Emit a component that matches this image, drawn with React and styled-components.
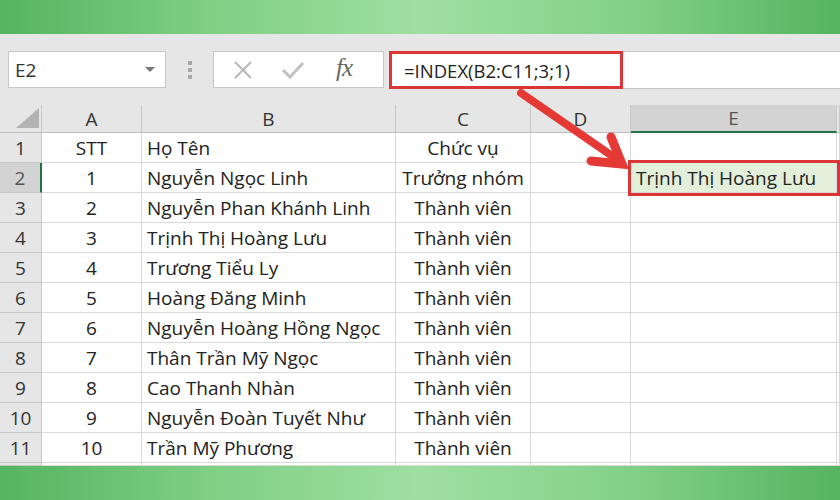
import React from "react";
import styled, { createGlobalStyle } from "styled-components";

const GlobalStyle = createGlobalStyle`
  html, body { margin: 0; padding: 0; background: #ffffff; }
  body { font-family: "Open Sans", "Liberation Sans", sans-serif; }
`;

const COLS = [42, 100, 254, 135, 100, 206, 3];

const Page = styled.div`
  position: relative;
  width: 840px;
  height: 500px;
  overflow: hidden;
  display: flex;
  flex-direction: column;
  background: #e6e6e6;
`;

const GreenBand = styled.div`
  height: ${(p) => p.$h}px;
  flex-shrink: 0;
  background: linear-gradient(90deg, #55b45f 0%, #7fcf85 25%, #9fdfa1 50%, #83d189 75%, #55b45f 100%);
`;

const Toolbar = styled.div`
  height: 71px;
  flex-shrink: 0;
  display: flex;
  align-items: flex-start;
  padding: 17px 0 0 8px;
  box-sizing: border-box;
  background: #e6e6e6;
`;

const NameBox = styled.div`
  width: 158px;
  height: 37px;
  box-sizing: border-box;
  background: #fff;
  border: 1px solid #c6c6c6;
  display: flex;
  align-items: center;
  justify-content: space-between;
  padding: 0 10px 0 6px;
  font-size: 19px;
  color: #333;
`;

const DropArrow = styled.span`
  width: 0;
  height: 0;
  border-left: 5px solid transparent;
  border-right: 5px solid transparent;
  border-top: 5px solid #777;
`;

const Grip = styled.div`
  width: 47px;
  height: 37px;
  display: flex;
  flex-direction: column;
  align-items: center;
  justify-content: center;
  gap: 3px;
  span {
    width: 4px;
    height: 4px;
    background: #a8a8a8;
  }
`;

const IconBox = styled.div`
  width: 171px;
  height: 37px;
  box-sizing: border-box;
  background: #fff;
  border: 1px solid #c6c6c6;
  display: flex;
  align-items: center;
  padding: 0 0 0 18px;
  gap: 26px;
`;

const Fx = styled.span`
  font-family: "Liberation Serif", "DejaVu Serif", serif;
  font-style: italic;
  font-size: 25px;
  color: #666;
  margin-left: 4px;
  letter-spacing: -1px;
  margin-top: -4px;
`;

const FormulaBar = styled.div`
  flex: 1;
  height: 38px;
  margin-left: 5px;
  box-sizing: border-box;
  background: #fff;
  border-top: 1px solid #c6c6c6;
  border-bottom: 1px solid #c6c6c6;
  display: flex;
`;

const FormulaHighlight = styled.div`
  width: 234px;
  height: 38px;
  margin-top: -1px;
  box-sizing: border-box;
  border: 3px solid #dc3535;
  display: flex;
  align-items: center;
  padding-left: 12px;
  font-size: 18.5px;
  color: #222;
  white-space: nowrap;
`;

const Sheet = styled.div`
  display: grid;
  grid-template-columns: ${COLS.map((c) => c + "px").join(" ")};
  grid-template-rows: 28px repeat(11, 30px) 3px;
  background: #fff;
`;

const Corner = styled.div`
  background: #e6e6e6;
  border-right: 1px solid #c8c8c8;
  border-bottom: 1px solid #bdbdbd;
  display: flex;
  align-items: flex-end;
  justify-content: flex-end;
  padding: 0 2px 4px 0;
  box-sizing: border-box;
`;

const ColHead = styled.div`
  background: ${(p) => (p.$active ? "#d3d3d3" : "#e6e6e6")};
  border-right: 1px solid #c8c8c8;
  border-bottom: ${(p) => (p.$active ? "2px solid #217346" : "1px solid #bdbdbd")};
  box-sizing: border-box;
  display: flex;
  align-items: center;
  justify-content: center;
  font-size: 19px;
  color: ${(p) => (p.$active ? "#555" : "#333")};
`;

const RowHead = styled.div`
  background: ${(p) => (p.$active ? "#d3d3d3" : "#e6e6e6")};
  border-right: ${(p) => (p.$active ? "2px solid #217346" : "1px solid #c8c8c8")};
  border-bottom: 1px solid #c8c8c8;
  box-sizing: border-box;
  display: flex;
  align-items: center;
  justify-content: center;
  font-size: 19px;
  color: ${(p) => (p.$active ? "#555" : "#333")};
`;

const Cell = styled.div`
  border-right: 1px solid #d9d9d9;
  border-bottom: 1px solid #d9d9d9;
  box-sizing: border-box;
  display: flex;
  align-items: center;
  justify-content: ${(p) => (p.$align === "left" ? "flex-start" : "center")};
  padding-left: ${(p) => (p.$align === "left" ? "5px" : "0")};
  font-size: 19px;
  color: #222;
  white-space: nowrap;
  overflow: hidden;
`;

const ResultCell = styled(Cell)`
  background: #e2efda;
  outline: 3px solid #dc3535;
  outline-offset: 0px;
  overflow: visible;
  z-index: 1;
  position: relative;
`;

const ArrowLayer = styled.svg`
  position: absolute;
  left: 0;
  top: 0;
  pointer-events: none;
  z-index: 2;
`;

const rows = [
  ["STT", "Họ Tên", "Chức vụ"],
  ["1", "Nguyễn Ngọc Linh", "Trưởng nhóm"],
  ["2", "Nguyễn Phan Khánh Linh", "Thành viên"],
  ["3", "Trịnh Thị Hoàng Lưu", "Thành viên"],
  ["4", "Trương Tiểu Ly", "Thành viên"],
  ["5", "Hoàng Đăng Minh", "Thành viên"],
  ["6", "Nguyễn Hoàng Hồng Ngọc", "Thành viên"],
  ["7", "Thân Trần Mỹ Ngọc", "Thành viên"],
  ["8", "Cao Thanh Nhàn", "Thành viên"],
  ["9", "Nguyễn Đoàn Tuyết Như", "Thành viên"],
  ["10", "Trần Mỹ Phương", "Thành viên"],
];

const letters = ["A", "B", "C", "D", "E", ""];

export default function App() {
  return (
    <Page>
      <GlobalStyle />
      <GreenBand $h={34} />
      <Toolbar>
        <NameBox>
          E2
          <DropArrow />
        </NameBox>
        <Grip>
          <span />
          <span />
          <span />
        </Grip>
        <IconBox>
          <svg width="22" height="22" viewBox="0 0 22 22">
            <path d="M3 3 L19 19 M19 3 L3 19" stroke="#b9b9b9" strokeWidth="2" fill="none" />
          </svg>
          <svg width="26" height="22" viewBox="0 0 26 22">
            <path d="M3 11 L10 18 L23 4" stroke="#c2c2c2" strokeWidth="3" fill="none" />
          </svg>
          <Fx>fx</Fx>
        </IconBox>
        <FormulaBar>
          <FormulaHighlight>=INDEX(B2:C11;3;1)</FormulaHighlight>
        </FormulaBar>
      </Toolbar>
      <Sheet>
        <Corner>
          <svg width="23" height="20" viewBox="0 0 23 20">
            <path d="M0 20 L23 0 L23 20 Z" fill="#b3b3b3" />
          </svg>
        </Corner>
        {letters.map((l, i) => (
          <ColHead key={i} $active={l === "E"}>
            {l}
          </ColHead>
        ))}
        {rows.map((r, i) => (
          <React.Fragment key={i}>
            <RowHead $active={i === 1}>{i + 1}</RowHead>
            <Cell>{r[0]}</Cell>
            <Cell $align="left">{r[1]}</Cell>
            <Cell>{r[2]}</Cell>
            <Cell />
            {i === 1 ? (
              <ResultCell $align="left">Trịnh Thị Hoàng Lưu</ResultCell>
            ) : (
              <Cell />
            )}
            <Cell />
          </React.Fragment>
        ))}
        {COLS.map((_, i) =>
          i === 0 ? <RowHead key={i} /> : <Cell key={i} />
        )}
      </Sheet>
      <GreenBand $h={34} />
      <ArrowLayer width="840" height="500" viewBox="0 0 840 500">
        <path d="M521 93 L618 160" stroke="#e53935" strokeWidth="8" strokeLinecap="round" fill="none" />
        <path
          d="M611 137 L622 164 L591 161"
          stroke="#e53935"
          strokeWidth="9"
          strokeLinecap="round"
          strokeLinejoin="miter"
          fill="none"
        />
      </ArrowLayer>
    </Page>
  );
}
